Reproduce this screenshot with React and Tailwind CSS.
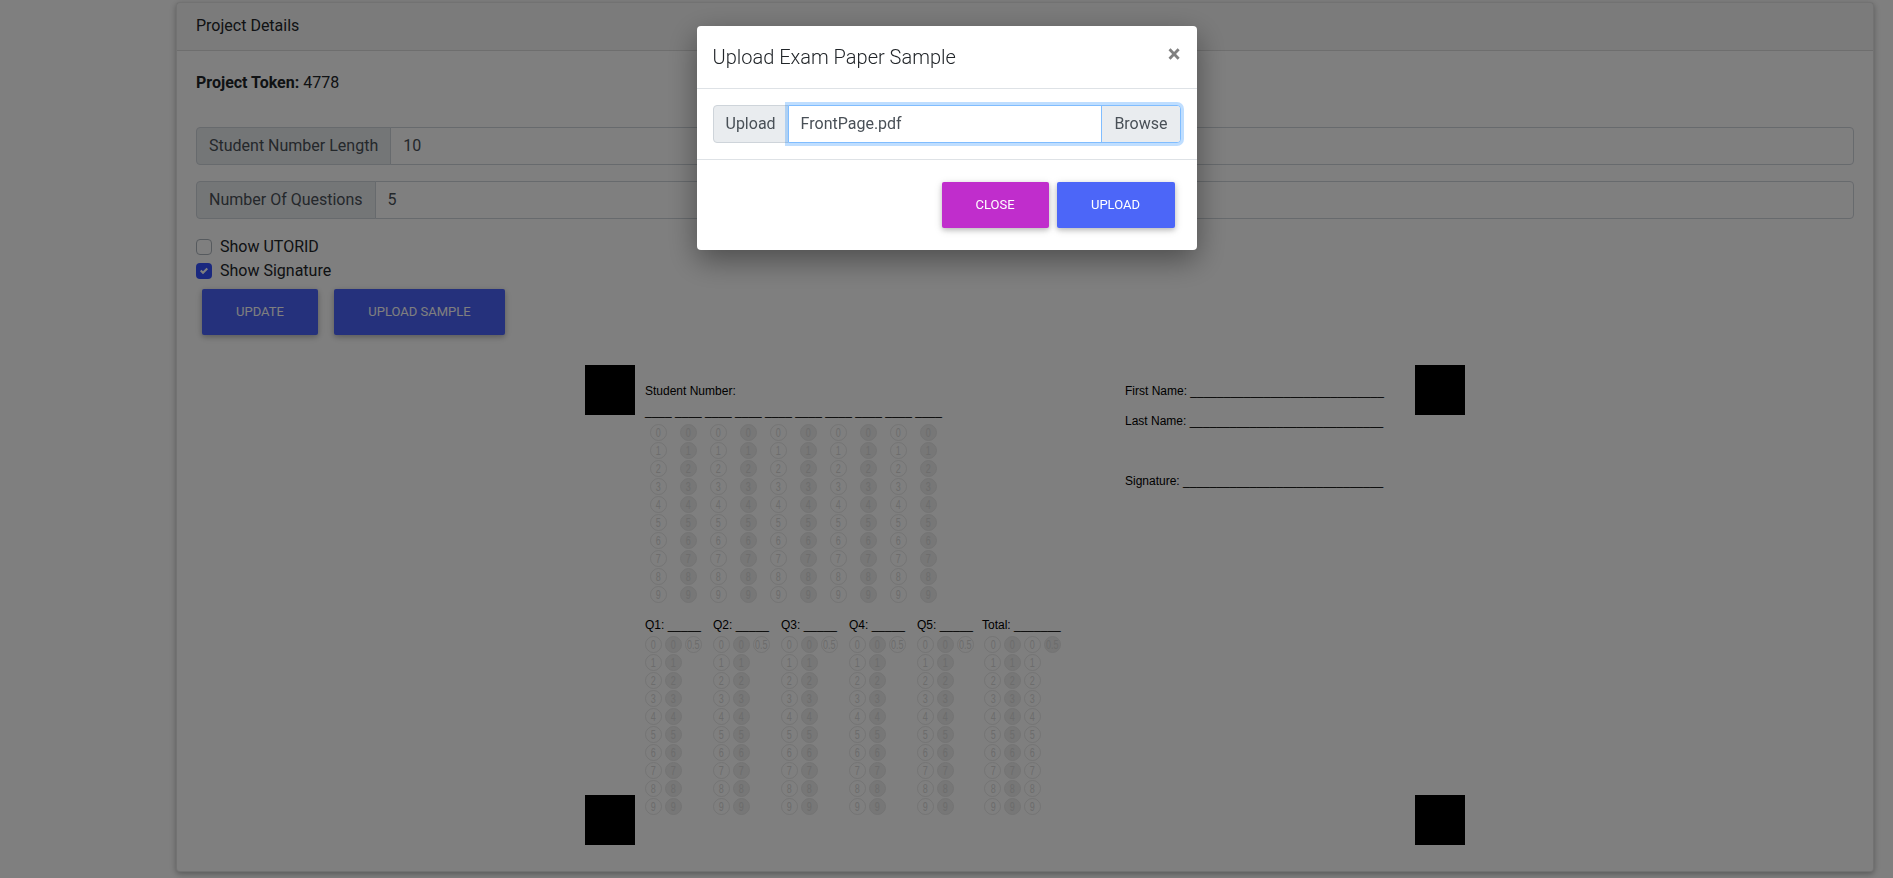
import React from 'react';

const digits = [0, 1, 2, 3, 4, 5, 6, 7, 8, 9];

const Bubble = ({ label, dark }) => (
  <div
    className={
      'w-[17px] h-[17px] shrink-0 rounded-full border border-[#e8e8e8] flex items-center justify-center text-[12px] leading-none text-[#d8d8d8] ' +
      (dark ? 'bg-[#eeeeee]' : '')
    }
  >
    <span className="inline-block scale-x-75">{label}</span>
  </div>
);

// one vertical column of 0-9 bubbles
const BubbleColumn = ({ dark, width }) => (
  <div className={'flex flex-col gap-px ' + width}>
    {digits.map((d) => (
      <div key={d} className="h-[17px] flex justify-center">
        <Bubble label={d} dark={dark} />
      </div>
    ))}
  </div>
);

const QuestionBlock = ({ label, width }) => (
  <div className={width}>
    <p className="h-[14px] leading-[14px] whitespace-pre">{label}</p>
    <div className="flex mt-[4px] -ml-[2px]">
      <BubbleColumn width="w-[20px]" />
      <BubbleColumn dark width="w-[20px]" />
      <div className="w-[20px] flex justify-center">
        <Bubble label="0.5" />
      </div>
    </div>
  </div>
);

const TotalBlock = () => (
  <div className="w-[80px] -ml-[3px]">
    <p className="h-[14px] leading-[14px] whitespace-pre">Total: _______</p>
    <div className="flex mt-[4px] ml-[1px]">
      <BubbleColumn width="w-[20px]" />
      <BubbleColumn dark width="w-[20px]" />
      <BubbleColumn width="w-[20px]" />
      <div className="w-[20px] flex justify-center">
        <Bubble label="0.5" dark />
      </div>
    </div>
  </div>
);

const Scantron = () => (
  <div className="w-[880px] h-[480px] mx-auto flex font-['Liberation_Sans',sans-serif] text-[12px] text-black">
    {/* corner marks left */}
    <div className="w-[50px] flex flex-col justify-between">
      <div className="w-[50px] h-[50px] bg-black" />
      <div className="w-[50px] h-[50px] bg-black" />
    </div>

    <div className="ml-[10px] w-[480px]">
      <p className="mt-[19px] h-[14px] leading-[14px]">Student Number:</p>
      <p className="mt-[6px] h-[14px] leading-[14px] whitespace-pre">
        ____ ____ ____ ____ ____ ____ ____ ____ ____ ____
      </p>
      <div className="flex mt-[6px] ml-[-2px]">
        {digits.map((c) => (
          <BubbleColumn key={c} dark={c % 2 === 1} width="w-[30px]" />
        ))}
      </div>
      <div className="flex mt-[15px]">
        {['Q1', 'Q2', 'Q3', 'Q4', 'Q5'].map((q) => (
          <QuestionBlock key={q} label={q + ': _____'} width="w-[68px]" />
        ))}
        <TotalBlock />
      </div>
    </div>

    <div className="w-[290px]">
      <p className="mt-[19px] h-[14px] leading-[14px] whitespace-pre">First Name: _____________________________</p>
      <p className="mt-[16px] h-[14px] leading-[14px] whitespace-pre">Last Name: _____________________________</p>
      <p className="mt-[46px] h-[14px] leading-[14px] whitespace-pre">Signature: ______________________________</p>
    </div>

    {/* corner marks right */}
    <div className="w-[50px] flex flex-col justify-between">
      <div className="w-[50px] h-[50px] bg-black" />
      <div className="w-[50px] h-[50px] bg-black" />
    </div>
  </div>
);

const InputRow = ({ label, value }) => (
  <div className="flex h-[38px] text-[#495057]">
    <span className="flex items-center px-3 bg-[#e9ecef] border border-[#ced4da] rounded-l-[4px]">{label}</span>
    <span className="flex-1 flex items-center px-3 -ml-px bg-white border border-[#ced4da] rounded-r-[4px]">{value}</span>
  </div>
);

const Checkbox = ({ checked, label }) => (
  <label className="flex items-center h-6 gap-2 text-[#212529]">
    {checked ? (
      <span className="w-4 h-4 rounded-[4px] bg-[#3450ff] flex items-center justify-center">
        <svg width="8" height="8" viewBox="0 0 8 8">
          <path fill="#fff" d="M6.564.75l-3.59 3.612-1.538-1.55L0 4.26 2.974 7.25 8 2.193z" />
        </svg>
      </span>
    ) : (
      <span className="w-4 h-4 rounded-[4px] bg-white border border-[#adb5bd]" />
    )}
    {label}
  </label>
);

const PrimaryButton = ({ children, color, width }) => (
  <button
    className={
      'h-[46px] rounded-[2px] text-[13px] text-white uppercase shadow-[0_2px_5px_rgba(0,0,0,0.2),0_2px_10px_rgba(0,0,0,0.12)] ' +
      color + ' ' + width
    }
  >
    {children}
  </button>
);

export default function App() {
  return (
    <div className="relative h-screen overflow-hidden bg-white font-['Roboto',sans-serif] text-[16px]">
      {/* page */}
      <div className="mt-[2px] ml-[176px] mr-[19px] h-[870px] bg-white border border-black/10 rounded-[4px] shadow-[0_2px_5px_rgba(0,0,0,0.2),0_2px_10px_rgba(0,0,0,0.12)]">
        <div className="h-[48px] flex items-center px-[19px] pb-px bg-black/[0.03] border-b border-black/10 text-[#212529]">
          Project Details
        </div>
        <div className="px-[19px]">
          <p className="mt-[20px] h-6 leading-6 text-[#212529]">
            <b className="font-bold">Project Token:</b> 4778
          </p>
          <div className="mt-[32px] flex flex-col gap-4">
            <InputRow label="Student Number Length" value="10" />
            <InputRow label="Number Of Questions" value="5" />
          </div>
          <div className="mt-[16px]">
            <Checkbox label="Show UTORID" />
            <Checkbox checked label="Show Signature" />
          </div>
          <div className="mt-[6px] ml-[6px] flex gap-4">
            <PrimaryButton color="bg-[#4a62f8]" width="w-[116px]">Update</PrimaryButton>
            <PrimaryButton color="bg-[#4a62f8]" width="w-[171px]">Upload Sample</PrimaryButton>
          </div>
          <div className="mt-[30px]">
            <Scantron />
          </div>
        </div>
      </div>

      {/* modal */}
      <div className="fixed inset-0 bg-black/50 flex justify-center items-start pt-[26px]">
        <div className="w-[500px] h-[224px] bg-white rounded-[4px] shadow-[0_10px_30px_rgba(0,0,0,0.4)] flex flex-col">
          <div className="h-[63px] flex items-start justify-between px-[16px] pt-[19px] border-b border-[#dee2e6]">
            <h5 className="text-[20px] leading-[24px] font-light text-[#212529]">Upload Exam Paper Sample</h5>
            <span className="text-[24px] leading-[24px] font-bold text-[#808080] -mt-[3px]">×</span>
          </div>
          <div className="h-[71px] px-[16px] flex items-center border-b border-[#dee2e6]">
            <div className="w-full flex h-[38px] text-[#495057]">
              <span className="flex items-center px-3 bg-[#e9ecef] border border-[#ced4da] rounded-l-[4px]">Upload</span>
              <div className="flex-1 -ml-px flex bg-white border border-[#80bdff] rounded-r-[4px] shadow-[0_0_0_3px_rgba(0,123,255,0.25)]">
                <span className="flex-1 flex items-center px-3">FrontPage.pdf</span>
                <span className="flex items-center px-3 bg-[#e9ecef] border-l border-[#80bdff] rounded-r-[3px]">Browse</span>
              </div>
            </div>
          </div>
          <div className="flex-1 flex items-start justify-end gap-2 pt-[22px] pr-[22px]">
            <PrimaryButton color="bg-[#c02dcc]" width="w-[107px]">Close</PrimaryButton>
            <PrimaryButton color="bg-[#4c66f8]" width="w-[118px]">Upload</PrimaryButton>
          </div>
        </div>
      </div>
    </div>
  );
}
